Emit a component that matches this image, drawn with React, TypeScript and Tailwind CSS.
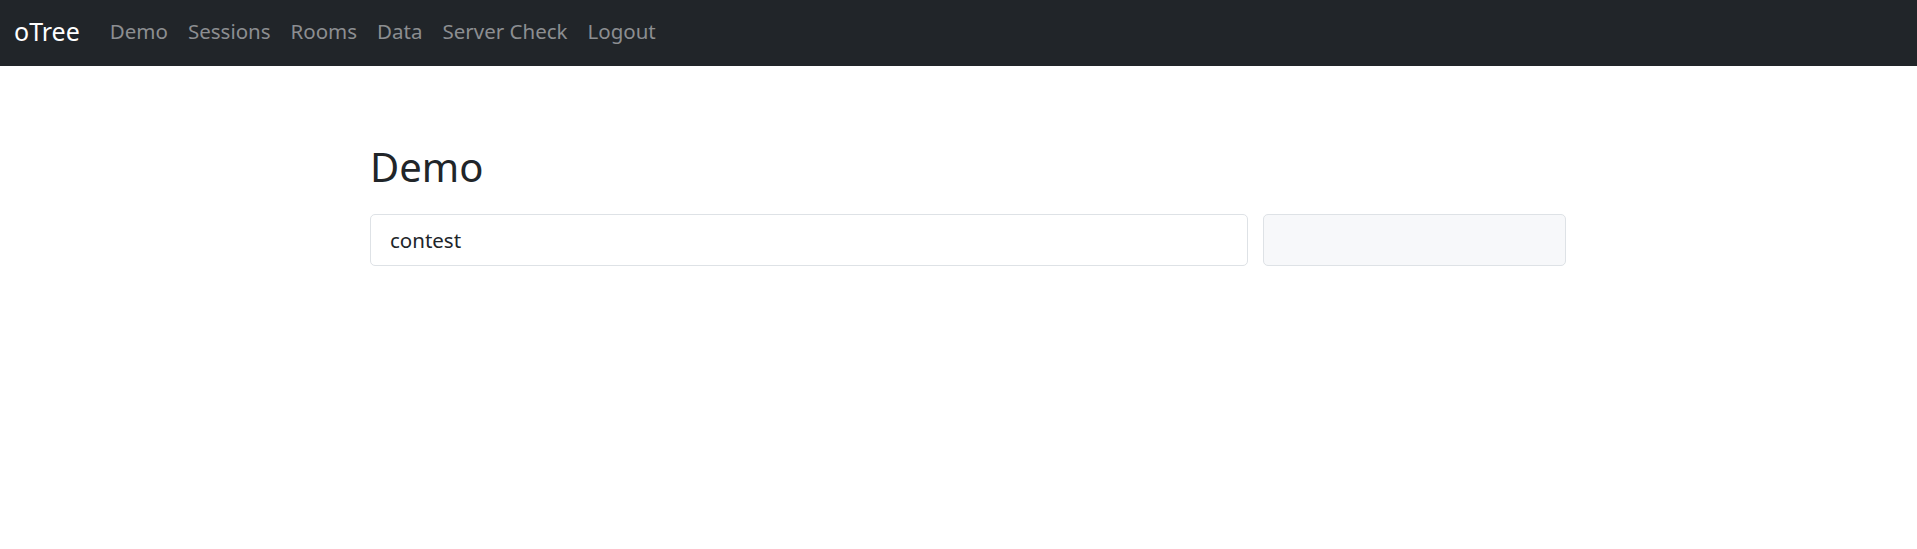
const links = ["Demo", "Sessions", "Rooms", "Data", "Server Check", "Logout"];

export default function App() {
  return (
    <div className="min-h-[549px] bg-white font-['Noto_Sans',sans-serif] text-[#212529]">
      <nav className="flex h-[66px] items-center bg-[#212529] pb-[3px] pl-[14px]">
        <a className="mr-[20px] text-[25px] text-white">oTree</a>
        <div className="flex">
          {links.map((link) => (
            <a key={link} className="px-[10px] text-[20.5px] text-[#8c8e91]">
              {link}
            </a>
          ))}
        </div>
      </nav>
      <div className="pl-[370px] pt-[77px]">
        <h1 className="text-[40px] leading-[1.2]">Demo</h1>
        <div className="mt-[23px] flex gap-[15px]">
          <div className="flex h-[52px] w-[878px] items-center rounded-[5px] border border-[#dee2e6] px-[19px] text-[20.5px]">
            contest
          </div>
          <div className="h-[52px] w-[303px] rounded-[5px] border border-[#dee2e6] bg-[#f7f8fa]" />
        </div>
      </div>
    </div>
  );
}
